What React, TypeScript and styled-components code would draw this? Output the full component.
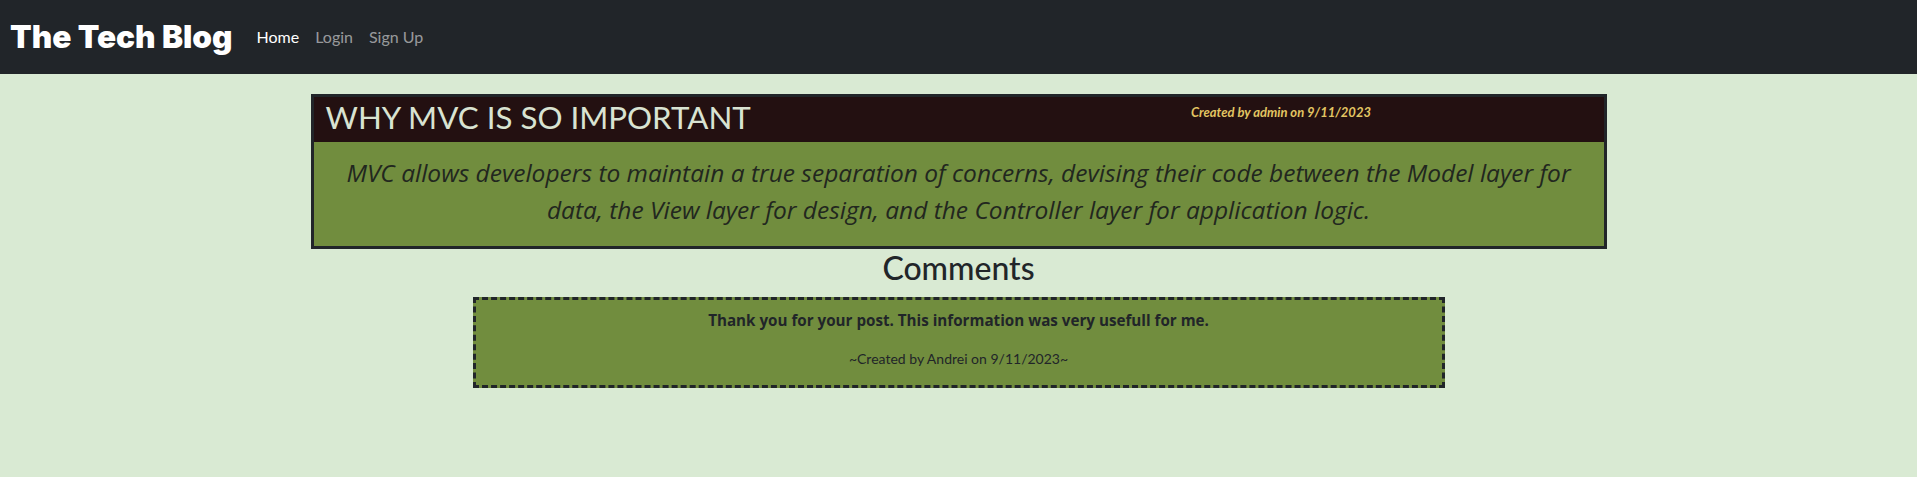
import React from "react";
import styled, { createGlobalStyle } from "styled-components";

const GlobalStyle = createGlobalStyle`
  * { box-sizing: border-box; }
  body {
    margin: 0;
    background: #d9ead3;
    color: #212529;
    font-family: Lato, "Open Sans", sans-serif;
    font-size: 16px;
    line-height: 1.5;
  }
`;

const Navbar = styled.nav`
  display: flex;
  align-items: center;
  height: 74px;
  padding: 0 10px;
  background: #212529;
`;

const Brand = styled.a`
  font-family: Inter, Lato, sans-serif;
  font-weight: 900;
  font-size: 31.6px;
  line-height: 48px;
  color: #ffffff;
  text-decoration: none;
  margin-right: 16px;
`;

const NavLink = styled.a<{ $active?: boolean }>`
  padding: 8px 8px;
  font-size: 16px;
  color: ${(p) => (p.$active ? "#ffffff" : "rgba(255,255,255,0.55)")};
  text-decoration: none;
`;

const Main = styled.main`
  display: flex;
  flex-direction: column;
  align-items: center;
  padding-top: 20px;
`;

const PostCard = styled.article`
  width: 1296px;
  border: 3px solid #212529;
  background: #718d3e;
`;

const PostHeader = styled.header`
  display: grid;
  grid-template-columns: 1fr 1fr;
  align-items: start;
  background: #231011;
  height: 45px;
`;

const PostTitle = styled.h2`
  margin: 0;
  padding: 2px 12px 0;
  font-size: 31.3px;
  font-weight: 400;
  line-height: 1.2;
  color: #d9e3d2;
`;

const PostMeta = styled.p`
  margin: 6px 0 0;
  text-align: center;
  font-size: 13px;
  font-weight: 700;
  font-style: italic;
  color: #e2c563;
`;

const PostBody = styled.p`
  margin: 0;
  padding: 12px 12px 18px;
  text-align: center;
  font-family: "Open Sans", Lato, sans-serif;
  font-size: 24.5px;
  font-style: italic;
  line-height: 37px;
  color: #22271f;
`;

const SectionTitle = styled.h2`
  margin: 0 0 10px;
  font-size: 32px;
  font-weight: 500;
  line-height: 1.2;
  color: #212529;
`;

const CommentBox = styled.div`
  width: 972px;
  border: 3px dashed #212529;
  background: #718d3e;
  padding: 9px 12px 4px;
  text-align: center;
`;

const CommentText = styled.p`
  margin: 0 0 16px;
  font-family: "Open Sans", Lato, sans-serif;
  font-weight: 700;
  font-size: 15.2px;
`;

const CommentMeta = styled.p`
  margin: 0 0 12px;
  font-size: 14px;
`;

export default function App() {
  return (
    <>
      <GlobalStyle />
      <Navbar>
        <Brand href="#">The Tech Blog</Brand>
        <NavLink href="#" $active>Home</NavLink>
        <NavLink href="#">Login</NavLink>
        <NavLink href="#">Sign Up</NavLink>
      </Navbar>
      <Main>
        <PostCard>
          <PostHeader>
            <PostTitle>WHY MVC IS SO IMPORTANT</PostTitle>
            <PostMeta>Created by admin on 9/11/2023</PostMeta>
          </PostHeader>
          <PostBody>
            MVC allows developers to maintain a true separation of concerns, devising their code between the Model layer for data, the View layer for design, and the Controller layer for application logic.
          </PostBody>
        </PostCard>
        <SectionTitle>Comments</SectionTitle>
        <CommentBox>
          <CommentText>Thank you for your post. This information was very usefull for me.</CommentText>
          <CommentMeta>~Created by Andrei on 9/11/2023~</CommentMeta>
        </CommentBox>
      </Main>
    </>
  );
}
